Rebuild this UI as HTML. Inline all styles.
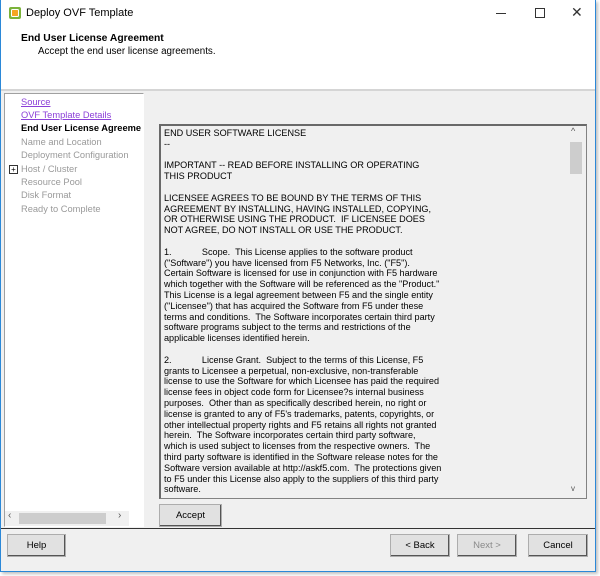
<!DOCTYPE html>
<html><head><style>
body{margin:0;width:600px;height:576px;background:#fff;font-family:"Liberation Sans",sans-serif;position:relative;overflow:hidden}
.win{position:absolute;left:0;top:0;width:594px;height:571px;border:1px solid #2b88d8;border-top:none;background:#f0f0f0;box-shadow:2px 2px 3px rgba(0,0,0,.25)}
.a{position:absolute}
.title{left:0;top:0;width:594px;height:28px;background:#fff}
.hdr{left:0;top:28px;width:594px;height:61px;background:#fff;border-bottom:2px solid #d5d5d5}
.btn{position:absolute;height:21px;background:#e1e1e1;border:1px solid #adadad;box-shadow:inset -1px -1px 0 #555;font-size:9.5px;text-align:center;line-height:21px;color:#000}
.lp{left:3px;top:93px;width:138px;height:432px;background:#fff;border:1px solid #a0a0a0;border-right-color:#fff;border-bottom-color:#fff}
.lp div{position:absolute;left:16px;font-size:9.3px;white-space:nowrap}
.ta{left:158px;top:124px;width:425px;height:372px;background:#f0f0f0;border:1px solid #828282;border-top:2px solid #696969;border-left:2px solid #696969}
.txt{position:absolute;left:3px;top:2px;font-size:9.1px;line-height:10.8px;white-space:pre;color:#000}
</style></head><body>
<div class="win">
<div class="a title">
 <svg class="a" style="left:7px;top:6px" width="14" height="14" viewBox="0 0 14 14"><rect x="1" y="1" width="12" height="12" rx="2" fill="#7bb33a"/><rect x="3.5" y="3.5" width="7" height="7" rx="1" fill="#f5a623" stroke="#fff" stroke-width="1"/></svg>
 <div class="a" style="left:25px;top:7px;font-size:11px">Deploy OVF Template</div>
 <div class="a" style="left:495px;top:13px;width:10px;height:1px;background:#333"></div>
 <div class="a" style="left:534px;top:8px;width:8px;height:8px;border:1px solid #333"></div>
 <div class="a" style="left:570px;top:4px;font-size:14px;color:#333">✕</div>
</div>
<div class="a hdr">
 <div class="a" style="left:20px;top:5px;font-size:10.3px;font-weight:bold">End User License Agreement</div>
 <div class="a" style="left:37px;top:18px;font-size:9.8px">Accept the end user license agreements.</div>
</div>
<div class="a lp">
 <div style="top:3px;color:#8b3fd8;text-decoration:underline">Source</div>
 <div style="top:16px;color:#8b3fd8;text-decoration:underline">OVF Template Details</div>
 <div style="top:29px;font-weight:bold">End User License Agreeme</div>
 <div style="top:43px;color:#9a9a9a">Name and Location</div>
 <div style="top:56px;color:#9a9a9a">Deployment Configuration</div>
 <div style="top:70px;color:#9a9a9a">Host / Cluster</div>
 <span class="a" style="left:4px;top:71px;width:7px;height:7px;border:1px solid #333;font-size:8px;line-height:7px;text-align:center">+</span>
 <div style="top:83px;color:#9a9a9a">Resource Pool</div>
 <div style="top:96px;color:#9a9a9a">Disk Format</div>
 <div style="top:110px;color:#9a9a9a">Ready to Complete</div>
 <div style="left:0;top:417px;width:124px;height:15px;background:#f0f0f0"></div>
 <div style="left:14px;top:419px;width:87px;height:11px;background:#cdcdcd"></div>
 <div style="left:3px;top:416px;font-size:10px;color:#555">‹</div>
 <div style="left:113px;top:416px;font-size:10px;color:#555">›</div>
</div>
<div class="a ta">
<div class="txt">END USER SOFTWARE LICENSE
--

IMPORTANT -- READ BEFORE INSTALLING OR OPERATING
THIS PRODUCT

LICENSEE AGREES TO BE BOUND BY THE TERMS OF THIS
AGREEMENT BY INSTALLING, HAVING INSTALLED, COPYING,
OR OTHERWISE USING THE PRODUCT.  IF LICENSEE DOES
NOT AGREE, DO NOT INSTALL OR USE THE PRODUCT.

1.            Scope.  This License applies to the software product
("Software") you have licensed from F5 Networks, Inc. ("F5").
Certain Software is licensed for use in conjunction with F5 hardware
which together with the Software will be referenced as the "Product."
This License is a legal agreement between F5 and the single entity
("Licensee") that has acquired the Software from F5 under these
terms and conditions.  The Software incorporates certain third party
software programs subject to the terms and restrictions of the
applicable licenses identified herein.

2.            License Grant.  Subject to the terms of this License, F5
grants to Licensee a perpetual, non-exclusive, non-transferable
license to use the Software for which Licensee has paid the required
license fees in object code form for Licensee?s internal business
purposes.  Other than as specifically described herein, no right or
license is granted to any of F5's trademarks, patents, copyrights, or
other intellectual property rights and F5 retains all rights not granted
herein.  The Software incorporates certain third party software,
which is used subject to licenses from the respective owners.  The
third party software is identified in the Software release notes for the
Software version available at http://askf5.com.  The protections given
to F5 under this License also apply to the suppliers of this third party
software.</div>
 <div class="a" style="left:406px;top:0;width:17px;height:370px;background:#f0f0f0"></div>
 <div class="a" style="left:409px;top:16px;width:12px;height:32px;background:#cdcdcd"></div>
 <div class="a" style="left:410px;top:0px;font-size:9px;color:#555">^</div>
 <div class="a" style="left:410px;top:358px;font-size:8px;color:#555">v</div>
</div>
<div class="btn" style="left:158px;top:504px;width:61px">Accept</div>
<div class="a" style="left:0;top:528px;width:594px;height:1px;background:#333"></div>
<div class="btn" style="left:6px;top:534px;width:57px">Help</div>
<div class="btn" style="left:389px;top:534px;width:58px">&lt; Back</div>
<div class="btn" style="left:456px;top:534px;width:58px;color:#8a8a8a">Next &gt;</div>
<div class="btn" style="left:527px;top:534px;width:58px">Cancel</div>
</div>
</body></html>
